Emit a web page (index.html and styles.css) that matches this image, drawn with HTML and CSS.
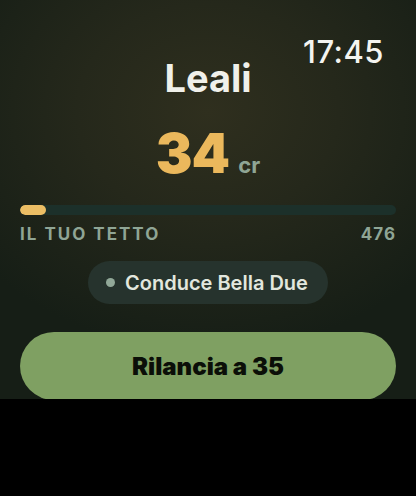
FILE: index.html
```html
<!DOCTYPE html>
<html lang="it">
<head>
    <meta charset="UTF-8">
    <meta name="viewport" content="width=device-width, initial-scale=1.0">
    <title>Leali</title>
    <link rel="stylesheet" href="styles.css">
</head>
<body>
    <div class="screen">
        <div class="clock">17:45</div>

        <h1 class="title">Leali</h1>

        <div class="amount">
            <span class="amount-value">34</span>
            <span class="amount-unit">cr</span>
        </div>

        <div class="bar">
            <div class="bar-fill" style="width: 7%"></div>
        </div>
        <div class="bar-labels">
            <span>IL TUO TETTO</span>
            <span>476</span>
        </div>

        <div class="status">
            <span class="status-dot"></span>
            <span>Conduce Bella Due</span>
        </div>

        <button class="raise">Rilancia a 35</button>
    </div>
</body>
</html>
```

FILE: styles.css
```css
body {
    margin: 0;
    padding: 0;
    background: #000;
    font-family: Inter, "Noto Sans", sans-serif;
}

.screen {
    position: relative;
    height: 399px;
    box-sizing: border-box;
    padding: 0 20px;
    display: flex;
    flex-direction: column;
    background: radial-gradient(ellipse 70% 60% at 50% 28%,
        #2f2f1e 0%,
        #25281b 45%,
        #161e16 100%
    );
    overflow: hidden;
}

.screen > * {
    flex-shrink: 0;
}

/* status bar time, sits over the content */
.clock {
    position: absolute;
    top: 33px;
    right: 32px;
    font-size: 31px;
    font-weight: 500;
    color: #f4f4f0;
    letter-spacing: 0.5px;
}

.title {
    margin: 55px 0 0 0;
    font-size: 38px;
    line-height: 46px;
    font-weight: 700;
    color: #f0f0ea;
    text-align: center;
}

.amount {
    display: flex;
    justify-content: center;
    align-items: baseline;
    gap: 9px;
    margin-top: 25px;
    line-height: 55px;
}

.amount-value {
    font-size: 55px;
    font-weight: 900;
    color: #ebb85c;
    letter-spacing: -1px;
}

.amount-unit {
    font-size: 22px;
    font-weight: 700;
    color: #8fa595;
}

.bar {
    height: 10px;
    margin-top: 12px;
    background: #1c302a;
    border-radius: 5px;
    overflow: hidden;
}

.bar-fill {
    height: 100%;
    background: #ebbd64;
    border-radius: 5px;
}

.bar-labels {
    display: flex;
    justify-content: space-between;
    margin-top: 9px;
    font-size: 17px;
    line-height: 20px;
    font-weight: 700;
    letter-spacing: 2px;
    color: #8fa595;
}

.bar-labels span:last-child {
    letter-spacing: 1px;
}

.status {
    align-self: center;
    display: flex;
    align-items: center;
    gap: 10px;
    height: 43px;
    margin-top: 17px;
    padding: 0 20px 0 18px;
    background: #26332d;
    border-radius: 22px;
    font-size: 20px;
    font-weight: 600;
    color: #e2e7de;
}

.status-dot {
    width: 9px;
    height: 9px;
    border-radius: 50%;
    background: #91a898;
}

.raise {
    height: 68px;
    margin-top: 28px;
    border: none;
    border-radius: 34px;
    background: #7fa062;
    color: #0b0f08;
    font-family: Inter, "Noto Sans", sans-serif;
    font-size: 24px;
    font-weight: 900;
    cursor: pointer;
}
```
